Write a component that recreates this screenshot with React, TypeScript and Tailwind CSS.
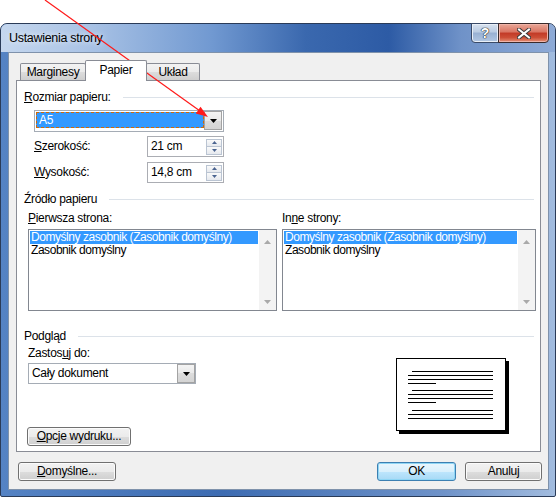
import React from 'react';

// small glyphs used by the combo boxes, spinners and list scrollbars
const DownTri = ({ color = '#000' }: { color?: string }) => (
  <svg width="7" height="4" viewBox="0 0 7 4">
    <path d="M0 0h7L3.5 4z" fill={color} />
  </svg>
);

const UpTri = ({ color = '#000' }: { color?: string }) => (
  <svg width="7" height="4" viewBox="0 0 7 4">
    <path d="M0 4h7L3.5 0z" fill={color} />
  </svg>
);

const ComboButton = () => (
  <div className="w-[18px] h-full border border-[#a3a3a3] bg-[linear-gradient(#f4f4f4,#e9e9e9_50%,#dcdcdc_50%,#d4d4d4)] flex items-center justify-center">
    <DownTri />
  </div>
);

const Spinner = ({ value }: { value: string }) => (
  <div className="w-[77px] h-[21px] border border-[#abadb3] bg-white flex items-center">
    <span className="flex-1 pl-[3px]">{value}</span>
    <div className="w-[16px] h-[16px] mr-[1px] flex flex-col">
      <div className="flex-1 border border-[#bac4d2] bg-[linear-gradient(#fafafa,#e6e9ee)] flex items-center justify-center">
        <svg width="5" height="3" viewBox="0 0 5 3"><path d="M0 3h5L2.5 0z" fill="#4b6490" /></svg>
      </div>
      <div className="flex-1 -mt-px border border-[#bac4d2] bg-[linear-gradient(#fafafa,#e6e9ee)] flex items-center justify-center">
        <svg width="5" height="3" viewBox="0 0 5 3"><path d="M0 0h5L2.5 3z" fill="#4b6490" /></svg>
      </div>
    </div>
  </div>
);

const SectionHeader = ({ children }: { children: React.ReactNode }) => (
  <div className="flex items-center h-[15px]">
    <span>{children}</span>
    <div className="flex-1 h-px ml-[12px] bg-[#dce2e9]" />
  </div>
);

const ListBox = ({ className }: { className: string }) => (
  <div className={className}>
    <div className="flex-1 pt-[1px] px-[1px] tracking-[-0.45px]">
      <div className="h-[13px] leading-[13px] pl-[1px] bg-[#3399ff] text-white">Domyślny zasobnik (Zasobnik domyślny)</div>
      <div className="h-[13px] leading-[13px] pl-[1px]">Zasobnik domyślny</div>
    </div>
    <div className="w-[17px] bg-[#f3f3f3] flex flex-col items-center justify-between pt-[10px] pb-[6px]">
      <UpTri color="#a9a9a9" />
      <DownTri color="#a9a9a9" />
    </div>
  </div>
);

const btn =
  'h-[19px] rounded-[3px] border border-[#707070] bg-[linear-gradient(#f2f2f2,#ebebeb_50%,#dddddd_50%,#cfcfcf)] shadow-[inset_0_0_0_1px_#fbfbfb] flex items-center justify-center';

const Page = () => (
  <div className="w-[110px] h-[73px] border border-black bg-white shadow-[3px_3px_0_#000] pt-[12px] pl-[11px]">
    <div className="flex flex-col">
      <div className="h-px w-[81px] ml-[4px] bg-black" />
      <div className="h-px w-[85px] mt-[3px] bg-black" />
      <div className="h-px w-[85px] mt-[3px] bg-black" />
      <div className="h-px w-[28px] mt-[3px] bg-black" />
      <div className="h-px w-[81px] ml-[4px] mt-[6px] bg-black" />
      <div className="h-px w-[85px] mt-[3px] bg-black" />
      <div className="h-px w-[85px] mt-[3px] bg-black" />
      <div className="h-px w-[28px] mt-[3px] bg-black" />
      <div className="h-px w-[81px] ml-[4px] mt-[7px] bg-black" />
      <div className="h-px w-[85px] mt-[3px] bg-black" />
      <div className="h-px w-[85px] mt-[3px] bg-black" />
    </div>
  </div>
);

const App = () => (
  <div className="relative w-[557px] h-[497px] bg-white overflow-hidden font-['Segoe_UI','Liberation_Sans',Arial,sans-serif] text-[12px] leading-[15px] tracking-[-0.3px] text-black">
    <div className="pt-[23px]">
      {/* window frame */}
      <div className="w-[556px] h-[474px] rounded-t-[7px] rounded-b-[2px] border border-[#2a3b58] bg-[linear-gradient(to_right,#5583c4,#3d6cb2_40%,#6f93c9_80%,#a2bcdf)] flex flex-col">
        {/* title bar */}
        <div className="h-[28px] rounded-t-[6px] flex items-start justify-between bg-[linear-gradient(to_right,#c5d7ee_0%,#abc4e6_15%,#7199d1_38%,#3a68ae_55%,#2d5ba5_70%,#6f92c8_83%,#8eaad6_100%)]">
          <span className="pl-[8px] pt-[7px] text-[12.5px] [text-shadow:0_0_6px_#ffffff]">Ustawienia strony</span>
          <div className="flex -mt-px mr-[6px] h-[20px]">
            <div className="w-[28px] h-[20px] rounded-bl-[4px] border border-[#3a4b68] bg-[linear-gradient(#d9e3f0,#b9cbe2_45%,#98b0d2_50%,#b3c8e3)] shadow-[inset_0_0_0_1px_#e9eff7] flex items-center justify-center">
              <span className="text-white font-bold text-[14px] leading-[14px] font-['Liberation_Sans',sans-serif] [text-shadow:0_0_1px_#222,0_0_1px_#222,0_0_1px_#222]">?</span>
            </div>
            <div className="w-[51px] h-[20px] -ml-px rounded-br-[4px] border border-[#3a2a2a] bg-[linear-gradient(#e9a898,#d97462_45%,#c23a26_50%,#cc4e36_75%,#e59278)] shadow-[inset_0_0_0_1px_#f0b4a8] flex items-center justify-center">
              <svg width="14" height="11" viewBox="0 0 14 11">
                <path d="M2 1.5L12 9.5M12 1.5L2 9.5" stroke="#3b3b3b" strokeWidth="4" strokeLinecap="square" />
                <path d="M2 1.5L12 9.5M12 1.5L2 9.5" stroke="#ffffff" strokeWidth="2" strokeLinecap="square" />
              </svg>
            </div>
          </div>
        </div>

        {/* client area */}
        <div className="ml-[7px] w-[541px] h-[438px] border border-[#7f92ab] bg-[#f0f0f0] flex flex-col">
          {/* tabs */}
          <div className="mt-[7px] ml-[11px] h-[20px] flex items-end">
            <div className="w-[66px] h-[17px] rounded-t-[2px] border border-b-0 border-[#898c95] bg-[linear-gradient(#f3f3f3,#ebebeb_50%,#dddddd_50%,#cfcfcf)] flex items-center justify-center">
              Marginesy
            </div>
            <div className="relative z-10 -ml-px -mb-px w-[62px] h-[21px] rounded-t-[2px] border border-b-0 border-[#898c95] bg-white flex items-center justify-center pb-[1px]">
              Papier
            </div>
            <div className="-ml-px w-[54px] h-[17px] rounded-t-[2px] border border-b-0 border-[#898c95] bg-[linear-gradient(#f3f3f3,#ebebeb_50%,#dddddd_50%,#cfcfcf)] flex items-center justify-center">
              Układ
            </div>
          </div>

          {/* tab panel */}
          <div className="ml-[7px] w-[525px] h-[372px] border border-[#898c95] bg-white pl-[7px] pr-[6px] flex flex-col">
            <div className="mt-[9px]">
              <SectionHeader><u>R</u>ozmiar papieru:</SectionHeader>
            </div>
            <div className="mt-[5px] ml-[10px] w-[190px] h-[22px] border border-[#a5acb5] bg-white p-[1px] flex items-start">
              <div className="flex-1 h-[16px] bg-[#3399ff] border border-dashed border-[#d06a08] text-white pl-[2px] leading-[14px]">A5</div>
              <div className="h-[19px] -mt-px">
                <ComboButton />
              </div>
            </div>
            <div className="mt-[4px] ml-[10px] flex items-center">
              <span className="w-[113px]"><u>S</u>zerokość:</span>
              <Spinner value="21 cm" />
            </div>
            <div className="mt-[5px] ml-[10px] flex items-center">
              <span className="w-[113px]"><u>W</u>ysokość:</span>
              <Spinner value="14,8 cm" />
            </div>

            <div className="mt-[9px]">
              <SectionHeader>Źródło papieru</SectionHeader>
            </div>
            <div className="mt-[4px] flex">
              <div className="ml-[4px] w-[249px]">
                <div><u>P</u>ierwsza strona:</div>
                <ListBox className="mt-[3px] w-[249px] h-[82px] border border-[#828790] bg-white flex" />
              </div>
              <div className="ml-[5px] w-[254px]">
                <div>In<u>n</u>e strony:</div>
                <ListBox className="mt-[3px] w-[254px] h-[82px] border border-[#828790] bg-white flex" />
              </div>
            </div>

            <div className="mt-[18px]">
              <SectionHeader>Podgląd</SectionHeader>
            </div>
            <div className="flex">
              <div className="ml-[4px] w-[168px] flex flex-col">
                <div className="mt-[2px]">Zastos<u>u</u>j do:</div>
                <div className="mt-[2px] w-[168px] h-[21px] border border-[#a5acb5] bg-white flex items-center">
                  <span className="flex-1 pl-[3px]">Cały dokument</span>
                  <div className="h-[19px]">
                    <ComboButton />
                  </div>
                </div>
                <div className={`mt-[43px] -ml-px w-[104px] ${btn}`}>
                  <span><u>O</u>pcje wydruku...</span>
                </div>
              </div>
              <div className="ml-[200px] mt-[14px]">
                <Page />
              </div>
            </div>
          </div>

          {/* dialog buttons */}
          <div className="mt-[10px] flex">
            <div className={`ml-[9px] w-[98px] ${btn}`}>
              <span><u>D</u>omyślne...</span>
            </div>
            <div className="ml-auto w-[79px] h-[19px] rounded-[3px] border border-[#3c7fb1] bg-[linear-gradient(#eaf6fd,#d9f0fc_50%,#bee6fd_50%,#a7d9f5)] shadow-[inset_0_0_0_1px_#8fd6f5] flex items-center justify-center">
              OK
            </div>
            <div className={`ml-[9px] mr-[6px] w-[77px] ${btn}`}>Anuluj</div>
          </div>
        </div>
      </div>
    </div>

    {/* red annotation arrow */}
    <svg className="absolute left-0 top-0 pointer-events-none" width="557" height="497" viewBox="0 0 557 497">
      <line x1="45" y1="0" x2="200" y2="111" stroke="#ff1a1a" strokeWidth="1.2" />
      <polygon points="208,117 195.9,113.4 200.5,106.8" fill="#ff1a1a" />
    </svg>
  </div>
);

export default App;
